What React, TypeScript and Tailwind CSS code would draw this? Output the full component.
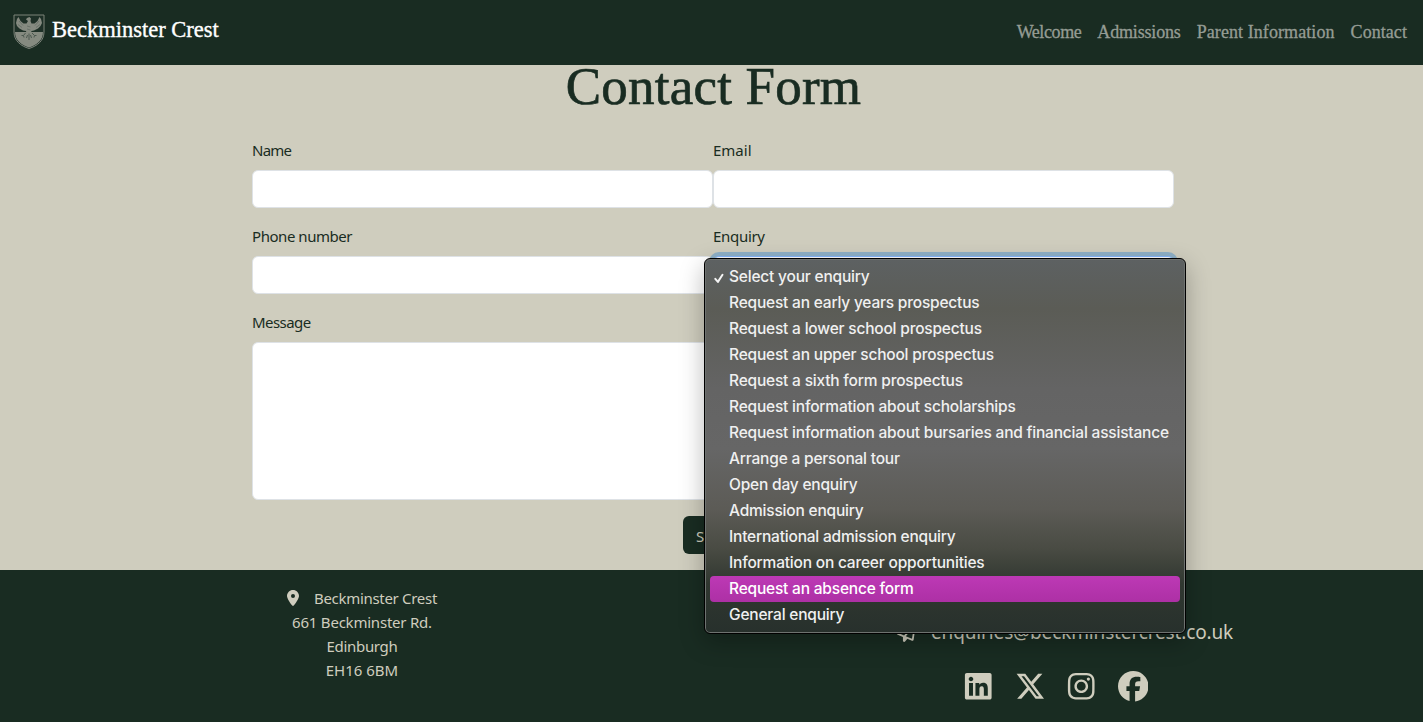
import type { ReactNode } from "react";
import { FaLinkedin, FaXTwitter, FaInstagram, FaFacebook, FaLocationDot, FaRegPaperPlane } from "react-icons/fa6";

const serif = "font-['Liberation_Serif',serif]";

const options = [
  "Select your enquiry",
  "Request an early years prospectus",
  "Request a lower school prospectus",
  "Request an upper school prospectus",
  "Request a sixth form prospectus",
  "Request information about scholarships",
  "Request information about bursaries and financial assistance",
  "Arrange a personal tour",
  "Open day enquiry",
  "Admission enquiry",
  "International admission enquiry",
  "Information on career opportunities",
  "Request an absence form",
  "General enquiry",
];

function Crest() {
  return (
    <svg viewBox="0 0 32 36" className="h-9 w-8 shrink-0">
      <path d="M1 1H31V18C31 27 24 32 16 34.500C8 32 1 27 1 18Z" fill="#1e3027" stroke="#7c8379" strokeWidth="1" />
      <path d="M2 18H30C30 26.500 23.500 31 16 33.500C8.500 31 2 26.500 2 18Z" fill="#858a80" />
      <path
        d="M14 4L16.500 3L18 4.500L17.500 7L18.500 9.500L21.500 9.500L24.500 7L26.500 3L28 5L29 9L27.500 12L25 14.500L21 16.500L18.500 17L17.500 20L15.500 21L13.500 19.500L13 17L10 16.500L6.500 14.500L4 12L3 9L4 5L5.500 3L7.500 7L10.500 9.500L13.500 9.500L15 7L13 5.500Z"
        fill="#858a80"
      />
      <path d="M6 7L10 11.500M5 10.500L9 13.500M26 7L22 11.500M27 10.500L23 13.500M14 12L17.500 13M14 15L17.500 16" stroke="#5c675f" strokeWidth=".7" />
      <path d="M16 19.500V26M14.500 21L13.500 24M17.500 21L18.500 24M12.500 19L10.500 21.500L8.500 21.500M10.500 21.500L11 23.500M19 19L21.500 21.500L23.500 21.500M21.500 21.500L21 23.500" stroke="#4a574e" strokeWidth="1" fill="none" />
    </svg>
  );
}

function Field({ label, track, children }: { label: string; track: string; children: ReactNode }) {
  return (
    <label className="flex flex-col gap-2">
      <span className={`h-6 text-[15px] leading-6 whitespace-nowrap ${track}`}>{label}</span>
      {children}
    </label>
  );
}

const control = "block w-full rounded-md border border-[#dee2e6] bg-white outline-none";

export default function App() {
  return (
    <div className="relative flex h-[722px] w-full flex-col overflow-hidden bg-[#cfcdbe] font-['Noto_Sans',sans-serif] text-[#192c22]">
      <nav className={`flex h-[65px] shrink-0 items-center justify-between bg-[#192c22] pr-4 pl-[13px] ${serif}`}>
        <a className="flex items-center gap-[7px] pb-0.5 text-white">
          <Crest />
          <span className="pb-1 text-[22.500px] whitespace-nowrap [-webkit-text-stroke:0.35px_currentColor]">Beckminster Crest</span>
        </a>
        <div className="flex gap-4 text-[18px] whitespace-nowrap text-[#959c94] [-webkit-text-stroke:0.3px_currentColor]">
          <a className="tracking-[-0.4px]">Welcome</a>
          <a className="tracking-[-0.17px]">Admissions</a>
          <a className="tracking-[0.08px]">Parent Information</a>
          <a className="tracking-[0.06px]">Contact</a>
        </div>
      </nav>

      <main className="flex h-[505px] shrink-0 flex-col items-center">
        <h1 className={`ml-1 h-[73px] text-[53px] leading-[42px] tracking-[0.2px] whitespace-nowrap [-webkit-text-stroke:0.7px_currentColor] ${serif}`}>
          Contact Form
        </h1>
        <form className="ml-[3px] grid w-[922px] grid-cols-2 gap-y-4">
          <Field label="Name" track="tracking-[-0.75px]">
            <input className={`h-[38px] ${control}`} />
          </Field>
          <Field label="Email" track="tracking-[0px]">
            <input className={`h-[38px] ${control}`} />
          </Field>
          <Field label="Phone number" track="tracking-[-0.45px]">
            <input className={`h-[38px] ${control}`} />
          </Field>
          <Field label="Enquiry" track="tracking-[-0.3px]">
            <div className="h-[38px] w-full rounded-md border border-[#86b7fe] bg-white shadow-[0_0_0_4px_#8fb1c8]" />
          </Field>
          <div className="col-span-2">
            <Field label="Message" track="tracking-[-0.55px]">
              <textarea className={`h-[158px] resize-none ${control}`} />
            </Field>
          </div>
          <button
            type="button"
            className="col-span-2 flex h-[38px] w-[60px] items-center justify-self-center rounded-md bg-[#192c22] pt-0.5 pl-[13px] text-[15px] text-[#cfcdbe]"
          >
            Send
          </button>
        </form>
      </main>

      <footer className="flex h-[152px] shrink-0 bg-[#192c22] text-[#cfcdbe]">
        <address className="ml-[252px] flex w-[220px] flex-col items-center pt-4 text-[15px] leading-6 whitespace-nowrap not-italic">
          <div className="flex items-center">
            <FaLocationDot className="mr-[15px] h-4 w-3" />
            <span className="tracking-[-0.3px]">Beckminster Crest</span>
          </div>
          <span className="tracking-[-0.22px]">661 Beckminster Rd.</span>
          <span className="tracking-[-0.33px]">Edinburgh</span>
          <span>EH16 6BM</span>
        </address>
        <div className="ml-[425px] flex flex-col pt-[47px]">
          <div className="flex h-[30px] items-center text-[19px] whitespace-nowrap">
            <FaRegPaperPlane className="mr-[15px] size-[19px]" />
            <span className="tracking-[-0.14px]">enquiries@beckminstercrest.co.uk</span>
          </div>
          <div className="mt-[24px] ml-[66px] flex h-[31px] items-center gap-[21px]">
            <FaLinkedin className="size-[30.5px]" />
            <FaXTwitter className="size-[30.5px]" />
            <FaInstagram className="size-[30.5px]" />
            <FaFacebook className="size-[30.5px]" />
          </div>
        </div>
      </footer>

      <ul className="absolute top-[258px] left-[704px] h-[376px] w-[482px] rounded-md border border-black bg-[linear-gradient(180deg,#5d6162_0px,#5b5c56_50px,#646464_130px,#666666_190px,#5c5b56_250px,#494b43_290px,#303730_325px,#27302c_375px)] p-[5px] font-['Inter',sans-serif] text-[15.500px] font-medium tracking-[-0.2px] text-[#f0f0f0] shadow-[inset_0_0_0_1px_#6e7270,0_8px_24px_rgba(0,0,0,0.28)]">
        {options.map((text, i) => (
          <li
            key={text}
            className={`flex h-[26px] items-center rounded-[4px] pl-[3px] whitespace-nowrap ${i === 12 ? "bg-[linear-gradient(180deg,#bd39b5,#ad30a5)] text-white" : ""}`}
          >
            <span className="w-4 shrink-0">
              {i === 0 && (
                <svg viewBox="0 0 12 12" className="mt-0.5 size-3">
                  <path d="M2.300 6.800L4.900 9.900L9.500 2.800" fill="none" stroke="#f4f4f4" strokeWidth="2" strokeLinecap="round" strokeLinejoin="round" />
                </svg>
              )}
            </span>
            <span>{text}</span>
          </li>
        ))}
      </ul>
    </div>
  );
}
